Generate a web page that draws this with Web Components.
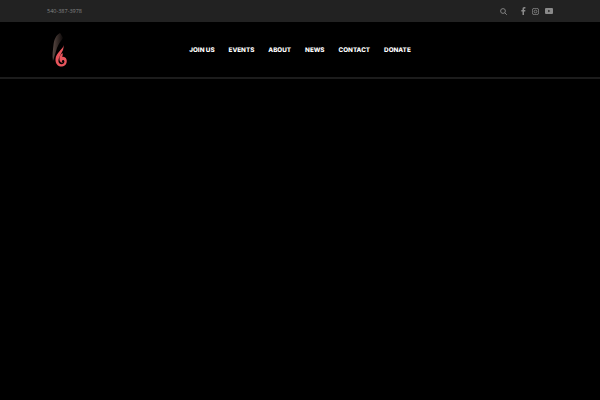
<!DOCTYPE html>
<html>
<head>
<meta charset="utf-8">
<title>Header</title>
<style>
html, body { margin: 0; height: 100%; background: #000; overflow: hidden; }
</style>
</head>
<body>
<site-page>
  <top-bar phone="540-387-3978"></top-bar>
  <main-header>
    <nav-link>JOIN US</nav-link>
    <nav-link>EVENTS</nav-link>
    <nav-link>ABOUT</nav-link>
    <nav-link>NEWS</nav-link>
    <nav-link>CONTACT</nav-link>
    <nav-link>DONATE</nav-link>
  </main-header>
</site-page>

<template id="page-tpl">
  <style>
    :host { display: flex; flex-direction: column; height: 400px; background: #000; }
  </style>
  <slot></slot>
</template>

<template id="top-tpl">
  <style>
    :host { display: block; background: #222; height: 22px; }
    .wrap { height: 100%; display: flex; align-items: center; justify-content: space-between; padding: 0 47px 0 47px; }
    .phone { font: 400 5.5px "Open Sans", sans-serif; color: #858585; }
    .icons { display: flex; align-items: center; }
    svg { display: block; fill: none; stroke: #8a8a8a; }
    .search { margin-right: 14px; }
    .fb { margin-right: 6px; }
    .ig { margin-right: 6px; }
  </style>
  <div class="wrap">
    <span class="phone"></span>
    <div class="icons">
      <svg class="search" width="7" height="7" viewBox="0 0 7 7" stroke-width=".9"><circle cx="3" cy="3" r="2.4"/><path d="M4.8 4.8 6.8 6.8"/></svg>
      <svg class="fb" width="5" height="8" viewBox="0 0 5 8" style="fill:#8a8a8a;stroke:none"><path d="M1.500 8V4.400H.3V3h1.200V2C1.500.8 2.200.1 3.300.1h1.100v1.300h-.7c-.5 0-.7.3-.7.7V3h1.400l-.2 1.400H3V8z"/></svg>
      <svg class="ig" width="7" height="7" viewBox="0 0 7 7" stroke-width=".8"><rect x=".4" y=".4" width="6.200" height="6.200" rx="1.700"/><circle cx="3.500" cy="3.500" r="1.400"/></svg>
      <svg width="8" height="6" viewBox="0 0 8 6" style="fill:#8a8a8a;stroke:none"><path fill-rule="evenodd" d="M1 0h6a1 1 0 0 1 1 1v4a1 1 0 0 1-1 1H1a1 1 0 0 1-1-1V1a1 1 0 0 1 1-1zM3.200 1.700v2.600L5.400 3z"/></svg>
    </div>
  </div>
</template>

<template id="head-tpl">
  <style>
    :host { display: block; height: 55px; border-bottom: 2px solid #1c1c1c; }
    .wrap { height: 100%; display: grid; grid-template-columns: 1fr auto 1fr; align-items: center; padding: 0 47px; }
    nav { display: flex; gap: 14px; }
    svg { display: block; margin-left: 1px; }
  </style>
  <div class="wrap">
    <svg width="24" height="37" viewBox="0 0 24 37">
      <defs>
        <linearGradient id="dark" x1="0" y1="0" x2="1" y2="0">
          <stop offset="0" stop-color="#5a4a44"/>
          <stop offset="1" stop-color="#0c0808"/>
        </linearGradient>
      </defs>
      <path d="M12 2C8 4 6 9 5.500 14 5 19 4 24 5 30 7 24 8 20 9 17 11 12 13 10 15 7 14 5 13 3 12 2z" fill="url(#dark)"/>
      <path d="M16 14C15 18 8 22 7.500 28c-.3 5 3 8 6.500 7.500 3.500-.5 5.500-3.500 4.500-7-.6-2-2.500-3-4.500-2.500 1-2 .8-3 .5-4-2 1.500-3.500 4-3 7 .4 2 2 3 3.500 2.500-1.500-.5-1.500-2 0-2.500 1.500 0 2 2 .5 3.500-2 1.500-4.500.5-5-2-.5-3.500 3-8 4.500-11.500z" fill="#e8555c"/>
    </svg>
    <nav><slot></slot></nav>
    <div></div>
  </div>
</template>

<template id="link-tpl">
  <style>
    :host { display: block; font: 800 6.3px Inter, "Liberation Sans", sans-serif; text-rendering: geometricPrecision; color: #fff; white-space: nowrap; }
  </style>
  <slot></slot>
</template>

<script>
function stamp(el, id) {
  var root = el.attachShadow({ mode: 'open' });
  root.appendChild(document.getElementById(id).content.cloneNode(true));
  return root;
}

customElements.define('site-page', class extends HTMLElement {
  constructor() { super(); stamp(this, 'page-tpl'); }
});

customElements.define('top-bar', class extends HTMLElement {
  constructor() { super(); stamp(this, 'top-tpl'); }
  connectedCallback() {
    this.shadowRoot.querySelector('.phone').textContent = this.getAttribute('phone');
  }
});

customElements.define('main-header', class extends HTMLElement {
  constructor() { super(); stamp(this, 'head-tpl'); }
});

customElements.define('nav-link', class extends HTMLElement {
  constructor() { super(); stamp(this, 'link-tpl'); }
});
</script>
</body>
</html>
